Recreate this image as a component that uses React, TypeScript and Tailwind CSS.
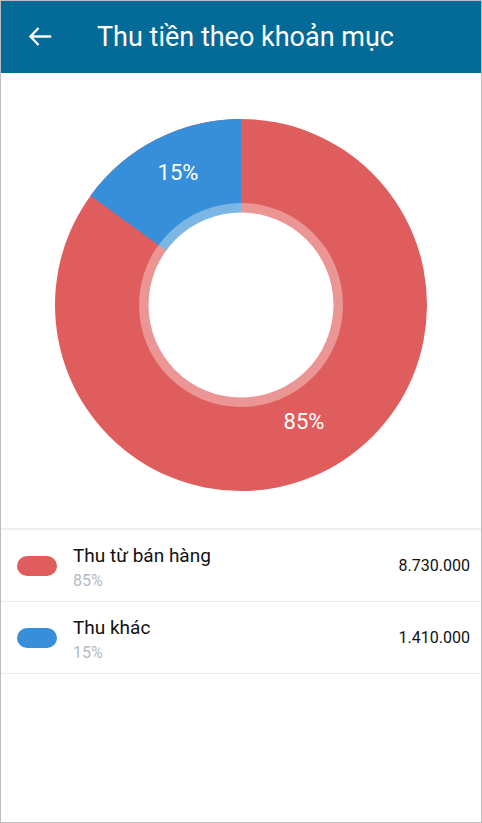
import React from "react";

const items = [
  { name: "Thu từ bán hàng", pct: "85%", value: "8.730.000", color: "bg-[#e05d5d]" },
  { name: "Thu khác", pct: "15%", value: "1.410.000", color: "bg-[#368fd8]" },
];

function Donut() {
  // 15% slice going counter-clockwise from 12 o'clock
  const r = 186;
  const a = (54 * Math.PI) / 180;
  const x = r - r * Math.sin(a);
  const y = r - r * Math.cos(a);
  return (
    <svg width="372" height="372" viewBox="0 0 372 372">
      <circle cx="186" cy="186" r="186" fill="#e05d5d" />
      <path d={`M186 186 L186 0 A186 186 0 0 0 ${x} ${y} Z`} fill="#368fd8" />
      <circle cx="186" cy="186" r="102" fill="#ffffff" fillOpacity="0.35" />
      <circle cx="186" cy="186" r="92.5" fill="#ffffff" />
      <text x="123" y="61" textAnchor="middle" fill="#fff" fontSize="22" fontFamily="Roboto, sans-serif">15%</text>
      <text x="249" y="310" textAnchor="middle" fill="#fff" fontSize="22" fontFamily="Roboto, sans-serif">85%</text>
    </svg>
  );
}

export default function App() {
  return (
    <div className="w-[482px] h-[823px] border border-[#bdbdbd] bg-white flex flex-col font-['Roboto',sans-serif] overflow-hidden">
      {/* Header */}
      <div className="h-[72px] bg-[#046a97] flex items-center shrink-0">
        <div className="w-[96px] pl-[27px] flex items-center">
          <svg width="24" height="24" viewBox="0 0 24 24" fill="none" stroke="#fff" strokeWidth="2.4" strokeLinecap="square">
            <path d="M22 11.5 H3.5" />
            <path d="M10.5 3 L2.5 11.5 L10.5 20" strokeLinecap="butt" />
          </svg>
        </div>
        <h1 className="text-white text-[27px] leading-none">Thu tiền theo khoản mục</h1>
      </div>

      {/* Chart */}
      <div className="flex justify-center pt-[46px] pb-[37px] border-b-2 border-[#ededf4]">
        <Donut />
      </div>

      {/* Legend */}
      <div>
        {items.map((it) => (
          <div key={it.name} className="h-[72px] flex items-center border-b border-[#ebebf3] pl-[16px] pr-[11px]">
            <div className={`w-[40px] h-[20px] rounded-full ${it.color}`} />
            <div className="ml-[16px] flex-1 pt-[2px]">
              <div className="text-[19px] leading-[23px] text-[#111]">{it.name}</div>
              <div className="mt-[4px] text-[16px] leading-[19px] text-[#b3b9c4]">{it.pct}</div>
            </div>
            <div className="text-[16px] leading-[20px] text-[#111]">{it.value}</div>
          </div>
        ))}
      </div>
    </div>
  );
}
